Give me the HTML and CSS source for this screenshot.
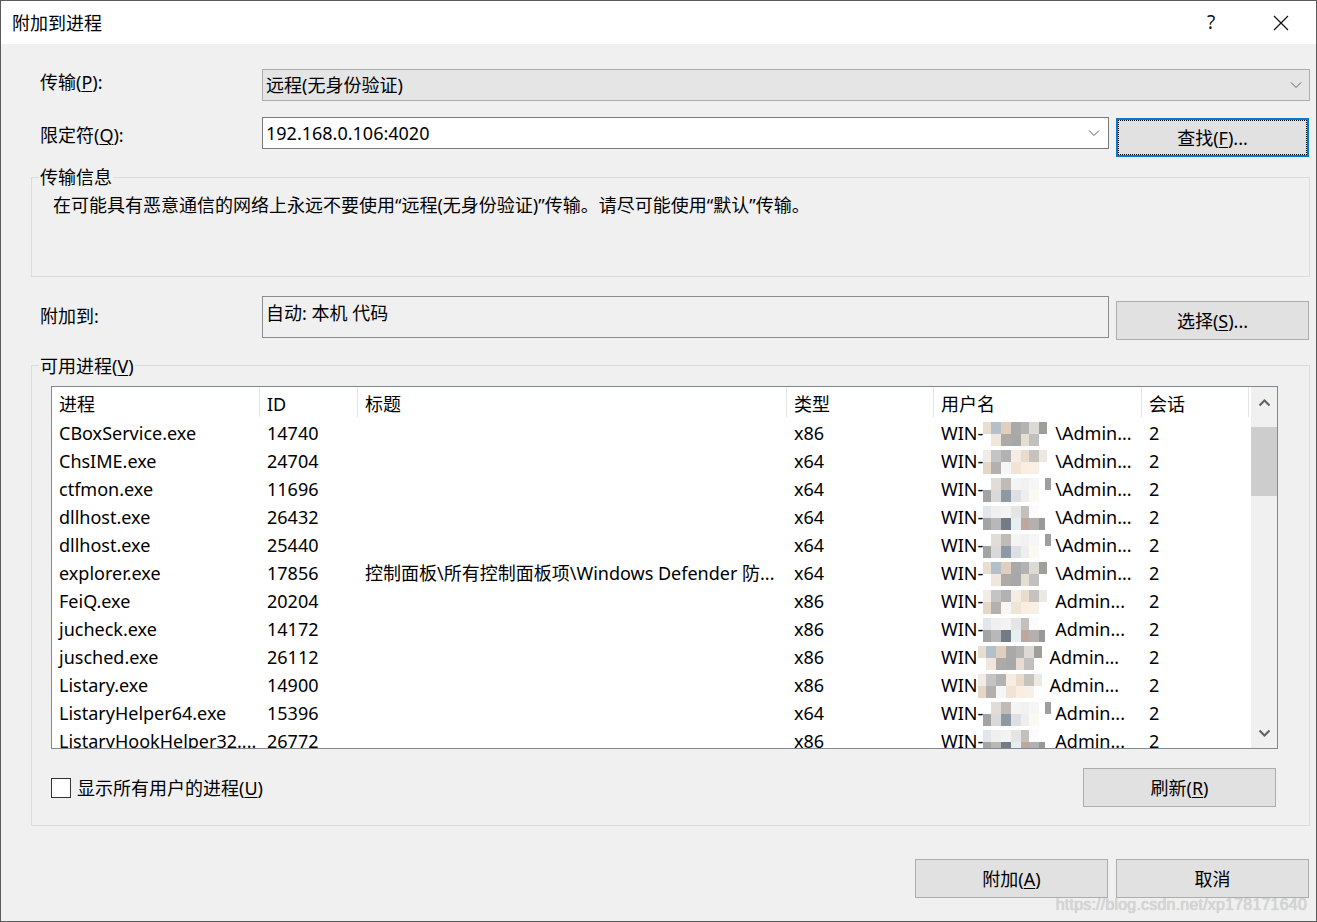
FILE: index.html
```html
<!DOCTYPE html>
<html lang="zh-CN">
<head>
<meta charset="utf-8">
<title>附加到进程</title>
<link rel="stylesheet" href="styles.css">
</head>
<body>
<div class="window">
  <div class="titlebar">
    <div class="title">附加到进程</div>
    <div class="tb-btn help">?</div>
    <div class="tb-btn close">
      <svg width="16" height="16" viewBox="0 0 16 16"><path d="M1 1L15 15M15 1L1 15" stroke="#111" stroke-width="1.2" fill="none"/></svg>
    </div>
  </div>
  <div class="content">
    <div class="row row1">
      <div class="label l1">传输(<u>P</u>):</div>
      <div class="combo dropdown">
        <span class="combo-text">远程(无身份验证)</span>
        <svg class="chev" width="12" height="8" viewBox="0 0 12 8"><path d="M1 1.5L6 6.5L11 1.5" fill="none" stroke="#606060" stroke-width="1"/></svg>
      </div>
    </div>
    <div class="row row2">
      <div class="label l2">限定符(<u>Q</u>):</div>
      <div class="combo editable">
        <span class="combo-text">192.168.0.106:4020</span>
        <svg class="chev" width="12" height="8" viewBox="0 0 12 8"><path d="M1 1.5L6 6.5L11 1.5" fill="none" stroke="#606060" stroke-width="1"/></svg>
      </div>
      <div class="btn focused">查找(<u>F</u>)...</div>
    </div>
    <fieldset class="group info-group">
      <legend>传输信息</legend>
      <div class="info-text">在可能具有恶意通信的网络上永远不要使用“远程(无身份验证)”传输。请尽可能使用“默认”传输。</div>
    </fieldset>
    <div class="row row3">
      <div class="label l3">附加到:</div>
      <div class="readonly-box">自动: 本机 代码</div>
      <div class="btn select-btn">选择(<u>S</u>)...</div>
    </div>
    <fieldset class="group proc-group">
      <legend>可用进程(<u>V</u>)</legend>
      <div class="listview">
        <div class="lv-main">
          <div class="lv-row lv-head">
            <div class="c c1">进程</div><div class="c c2">ID</div><div class="c c3">标题</div><div class="c c4">类型</div><div class="c c5">用户名</div><div class="c c6">会话</div>
          </div>
          <div class="lv-body">
            <div class="lv-row"><div class="c c1">CBoxService.exe</div><div class="c c2">14740</div><div class="c c3"></div><div class="c c4">x86</div><div class="c c5">WIN-<span class="mz m1"></span>\Admin...</div><div class="c c6">2</div></div>
            <div class="lv-row"><div class="c c1">ChsIME.exe</div><div class="c c2">24704</div><div class="c c3"></div><div class="c c4">x64</div><div class="c c5">WIN-<span class="mz m2"></span>\Admin...</div><div class="c c6">2</div></div>
            <div class="lv-row"><div class="c c1">ctfmon.exe</div><div class="c c2">11696</div><div class="c c3"></div><div class="c c4">x64</div><div class="c c5">WIN-<span class="mz m3"></span>\Admin...</div><div class="c c6">2</div></div>
            <div class="lv-row"><div class="c c1">dllhost.exe</div><div class="c c2">26432</div><div class="c c3"></div><div class="c c4">x64</div><div class="c c5">WIN-<span class="mz m4"></span>\Admin...</div><div class="c c6">2</div></div>
            <div class="lv-row"><div class="c c1">dllhost.exe</div><div class="c c2">25440</div><div class="c c3"></div><div class="c c4">x64</div><div class="c c5">WIN-<span class="mz m3"></span>\Admin...</div><div class="c c6">2</div></div>
            <div class="lv-row"><div class="c c1">explorer.exe</div><div class="c c2">17856</div><div class="c c3">控制面板\所有控制面板项\Windows Defender 防...</div><div class="c c4">x64</div><div class="c c5">WIN-<span class="mz m1"></span>\Admin...</div><div class="c c6">2</div></div>
            <div class="lv-row"><div class="c c1">FeiQ.exe</div><div class="c c2">20204</div><div class="c c3"></div><div class="c c4">x86</div><div class="c c5">WIN-<span class="mz m2"></span>Admin...</div><div class="c c6">2</div></div>
            <div class="lv-row"><div class="c c1">jucheck.exe</div><div class="c c2">14172</div><div class="c c3"></div><div class="c c4">x86</div><div class="c c5">WIN-<span class="mz m4"></span>Admin...</div><div class="c c6">2</div></div>
            <div class="lv-row"><div class="c c1">jusched.exe</div><div class="c c2">26112</div><div class="c c3"></div><div class="c c4">x86</div><div class="c c5">WIN<span class="mz m1"></span>Admin...</div><div class="c c6">2</div></div>
            <div class="lv-row"><div class="c c1">Listary.exe</div><div class="c c2">14900</div><div class="c c3"></div><div class="c c4">x86</div><div class="c c5">WIN<span class="mz m2"></span>Admin...</div><div class="c c6">2</div></div>
            <div class="lv-row"><div class="c c1">ListaryHelper64.exe</div><div class="c c2">15396</div><div class="c c3"></div><div class="c c4">x64</div><div class="c c5">WIN-<span class="mz m3"></span>Admin...</div><div class="c c6">2</div></div>
            <div class="lv-row"><div class="c c1">ListaryHookHelper32....</div><div class="c c2">26772</div><div class="c c3"></div><div class="c c4">x86</div><div class="c c5">WIN-<span class="mz m4"></span>Admin...</div><div class="c c6">2</div></div>
          </div>
        </div>
        <div class="scrollbar">
          <div class="sb-btn">
            <svg width="13" height="9" viewBox="0 0 13 9"><path d="M1.5 7.5L6.5 2.5L11.5 7.5" fill="none" stroke="#606060" stroke-width="2"/></svg>
          </div>
          <div class="sb-track"><div class="sb-thumb"></div></div>
          <div class="sb-btn">
            <svg width="13" height="9" viewBox="0 0 13 9"><path d="M1.5 1.5L6.5 6.5L11.5 1.5" fill="none" stroke="#606060" stroke-width="2"/></svg>
          </div>
        </div>
      </div>
      <div class="check-row">
        <div class="checkbox"></div>
        <div class="check-label">显示所有用户的进程(<u>U</u>)</div>
        <div class="btn refresh-btn">刷新(<u>R</u>)</div>
      </div>
    </fieldset>
    <div class="bottom-row">
      <div class="btn">附加(<u>A</u>)</div>
      <div class="btn">取消</div>
    </div>
  </div>
  <div class="watermark">https://blog.csdn.net/xp178171640</div>
</div>
</body>
</html>
```
FILE: styles.css
```css
* { box-sizing: border-box; }
html, body { margin: 0; padding: 0; background: #fff; }
body {
  font-family: "Noto Sans", "Noto Sans CJK SC", sans-serif;
  font-size: 18px;
  color: #000;
}
u { text-decoration: underline; text-underline-offset: 2px; text-decoration-thickness: 1px; }

.window {
  position: relative;
  width: 1317px;
  height: 922px;
  border: 1px solid #5a5a5a;
  background: #f0f0f0;
  display: flex;
  flex-direction: column;
  overflow: hidden;
}

.titlebar {
  height: 43px;
  flex: none;
  background: #fff;
  display: flex;
  align-items: center;
  padding-left: 11px;
}
.title { flex: 1; line-height: 22px; }
.tb-btn {
  width: 70px;
  height: 43px;
  display: flex;
  align-items: center;
  justify-content: center;
}
.help { font-size: 19px; color: #111; padding-bottom: 2px; }

.content {
  flex: 1;
  padding: 0 6px 0 30px;
  display: flex;
  flex-direction: column;
}

.row { display: flex; align-items: flex-start; }
.row1 { margin-top: 25px; }
.row2 { margin-top: 16px; }
.row3 { margin-top: 19px; align-items: flex-start; }

.label {
  width: 231px;
  flex: none;
  padding-left: 9px;
  line-height: 32px;
  white-space: nowrap;
}
.l1 { margin-top: -3px; }
.l2 { margin-top: 2px; }
.l3 { line-height: 40px; }

.combo {
  flex: 1;
  height: 32px;
  display: flex;
  align-items: center;
  padding-left: 3px;
  padding-right: 7px;
  white-space: nowrap;
}
.combo-text { flex: 1; line-height: 30px; }
.dropdown { background: #e5e5e5; border: 1px solid #adadad; }
.editable { background: #fff; border: 1px solid #7a7a7a; padding-right: 8px; }
.chev { flex: none; }

.btn {
  width: 193px;
  height: 39px;
  flex: none;
  background: #e1e1e1;
  border: 1px solid #adadad;
  display: flex;
  align-items: center;
  justify-content: center;
  line-height: 22px;
  white-space: nowrap;
}
.row2 .btn { margin: 1px 1px 0 7px; }
.focused {
  border: 2px solid #0078d7;
  outline: 1px dotted #000;
  outline-offset: -3px;
}

.group {
  margin: 0;
  padding: 0;
  min-width: 0;
  border: 1px solid #dcdcdc;
}
.group legend {
  margin-left: 7px;
  padding: 0 1px;
  line-height: 22px;
}
.info-group { margin-top: 9px; height: 111px; }
.info-text { padding: 7px 0 0 21px; line-height: 20px; white-space: nowrap; }

.readonly-box {
  flex: 1;
  height: 42px;
  border: 1px solid #8c8c8c;
  background: #f0f0f0;
  padding: 3px 0 0 3px;
  line-height: 26px;
  white-space: nowrap;
}
.select-btn { margin: 5px 1px 0 7px; }

.proc-group { margin-top: 14px; height: 472px; }
.proc-group legend { padding-top: 2px; line-height: 20px; }

.listview {
  margin: 10px 31px 0 19px;
  height: 363px;
  border: 1px solid #828790;
  background: #fff;
  display: flex;
}
.lv-main { flex: 1; min-width: 0; display: flex; flex-direction: column; }
.lv-row { display: flex; height: 28px; }
.lv-head { height: 30px; flex: none; }
.lv-body { flex: 1; overflow: hidden; }
.c {
  flex: none;
  padding-left: 7px;
  padding-top: 4px;
  white-space: nowrap;
  overflow: hidden;
  line-height: 24px;
}
.lv-head .c { line-height: 26px; border-right: 1px solid #e5e5e5; }
.c1 { width: 208px; }
.c2 { width: 98px; }
.c3 { width: 429px; }
.c4 { width: 147px; }
.c5 { width: 208px; overflow: visible; }
.c6 { width: 107px; }

.mz {
  display: inline-block;
  width: 72px;
  height: 24px;
  vertical-align: -6px;
  background-repeat: no-repeat;
  background-size: 100% 50%, 100% 50%;
  background-position: top left, bottom left;
}
.m1 {
  background-image:
    linear-gradient(90deg, #e9dcd0 0 8px, #b4bfcc 8px 18px, #e0cfbe 18px 28px, #a9a9a9 28px 38px, #b3b3b3 38px 46px, #ddd9d4 46px 56px, #a09e9b 56px 64px, transparent 64px),
    linear-gradient(90deg, transparent 0 8px, #f0e6dc 8px 18px, #aeaaa8 18px 28px, #a8a8a8 28px 38px, #e6ddd2 38px 46px, #c2c0be 46px 56px, transparent 56px);
}
.m2 {
  background-image:
    linear-gradient(90deg, #f3ece6 0 8px, #c4c4c4 8px 18px, #b2b2b2 18px 28px, #f5ece3 28px 38px, #e9dccc 38px 46px, #c6c2bd 46px 56px, #ece9e3 56px 64px, transparent 64px),
    linear-gradient(90deg, #e6d6c6 0 8px, #b4b0ae 8px 18px, #f6f6f6 18px 28px, #efe4d6 28px 38px, #fbeee0 38px 46px, #f8efe6 46px 56px, transparent 56px);
}
.m3 {
  background-image:
    linear-gradient(90deg, transparent 0 8px, #e0dcd8 8px 18px, #bfbcb8 18px 28px, #f4f4f4 28px 38px, #f1f1f1 38px 46px, #f6f6f6 46px 56px, transparent 56px 62px, #9e9e9e 62px 68px, transparent 68px),
    linear-gradient(90deg, #a3a3a3 0 8px, #d9d9d9 8px 18px, #8d9aa6 18px 28px, #dde0e2 28px 38px, #eeeeee 38px 46px, #fafaf2 46px 56px, transparent 56px);
}
.m4 {
  background-image:
    linear-gradient(90deg, #e2e6ea 0 8px, #efefef 8px 18px, #f3f3f3 18px 28px, #e5e5e5 28px 38px, #c4c0bc 38px 46px, #fbfbfb 46px 56px, transparent 56px),
    linear-gradient(90deg, #a4a4a4 0 8px, #b8b8b8 8px 18px, #737b84 18px 28px, #e6eef2 28px 38px, #bda8a0 38px 46px, #b4b0b0 46px 56px, #999 56px 62px, transparent 62px);
}

.scrollbar {
  width: 26px;
  flex: none;
  background: #f0f0f0;
  display: flex;
  flex-direction: column;
}
.sb-btn {
  height: 30px;
  flex: none;
  display: flex;
  align-items: center;
  justify-content: center;
}
.sb-track { flex: 1; }
.sb-thumb { margin-top: 10px; height: 69px; background: #cdcdcd; }

.check-row {
  margin: 19px 33px 0 19px;
  display: flex;
  align-items: center;
}
.checkbox {
  width: 20px;
  height: 20px;
  border: 1px solid #333;
  background: #fff;
  flex: none;
}
.check-label { margin-left: 6px; line-height: 22px; white-space: nowrap; }
.refresh-btn { margin-left: auto; }

.bottom-row {
  margin-top: 33px;
  margin-right: 1px;
  display: flex;
  justify-content: flex-end;
  gap: 8px;
}

.watermark {
  position: absolute;
  right: 9px;
  bottom: 7px;
  font-family: "Liberation Sans", sans-serif;
  font-size: 16px;
  color: #d6d6d6;
  text-shadow: 0 0 1px #b8b8b8;
  letter-spacing: 0.2px;
}
```
